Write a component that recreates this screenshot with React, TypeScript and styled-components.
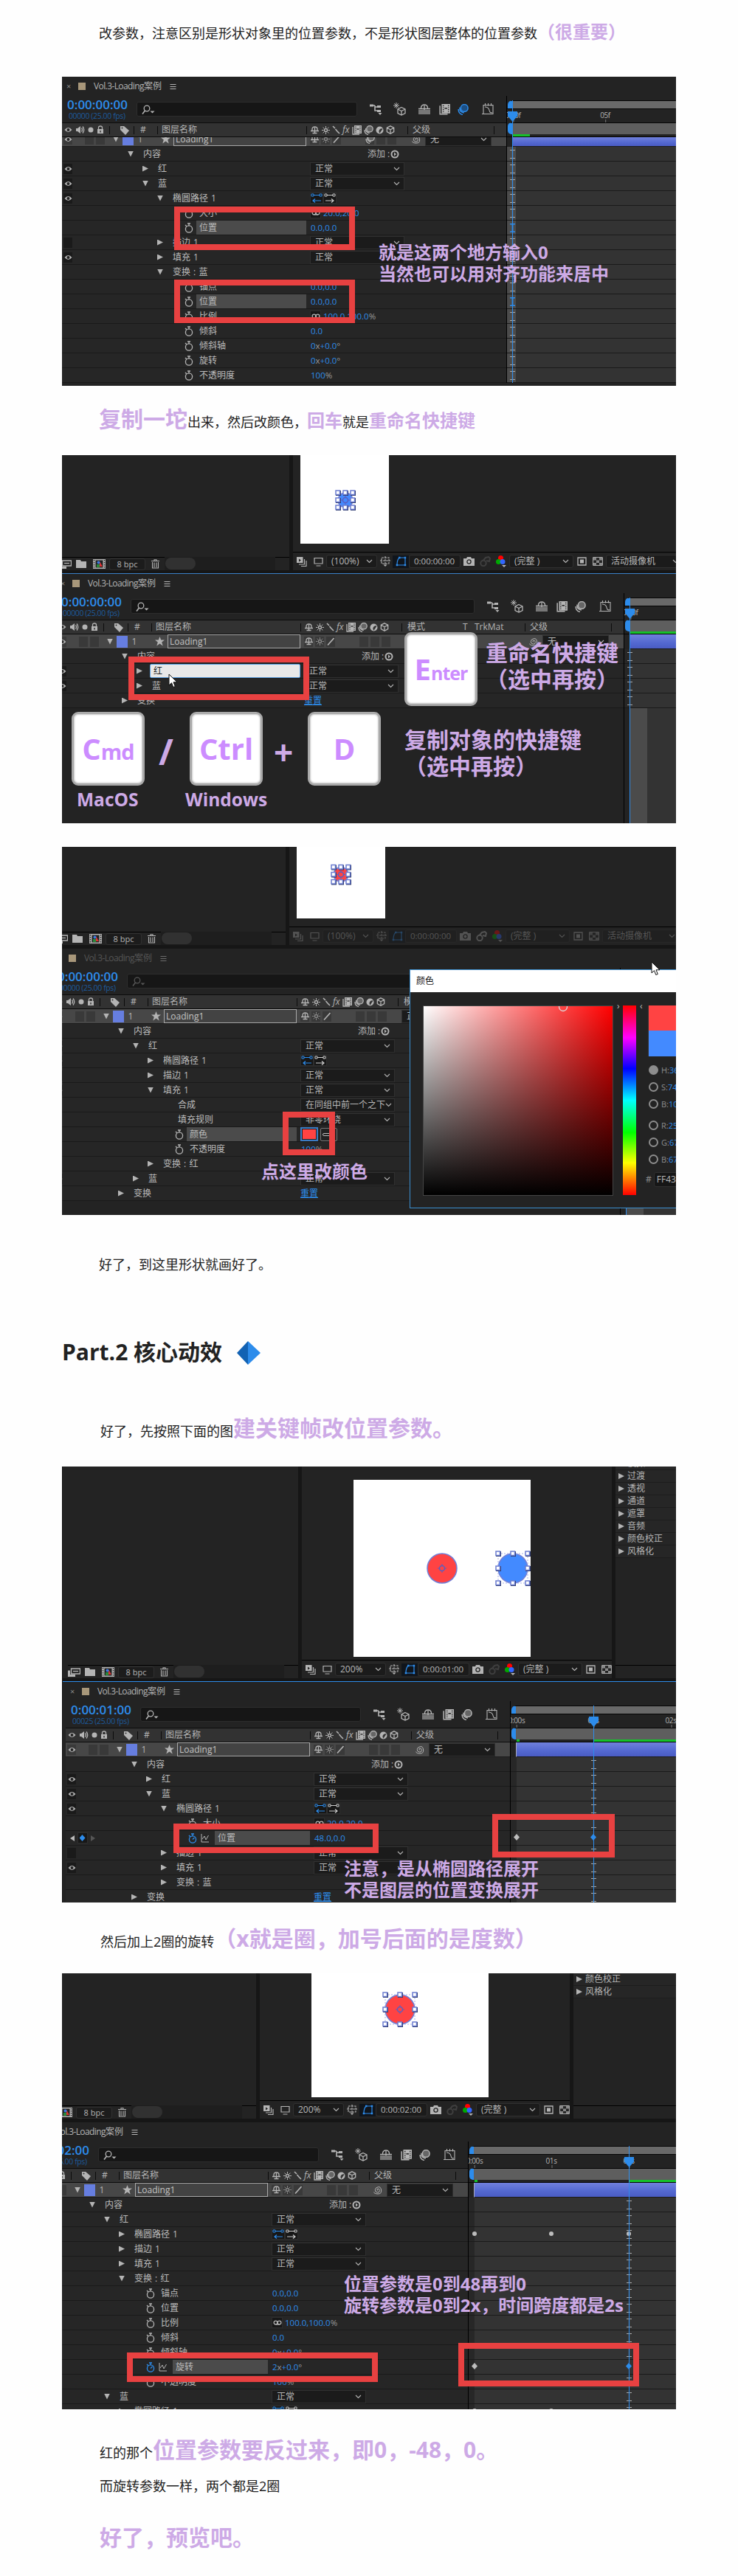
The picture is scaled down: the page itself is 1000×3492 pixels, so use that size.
import React from 'react';
import styled, { createGlobalStyle, css } from 'styled-components';

const BLUE = '#2d8ceb';
const GREY = '#b4b4b4';
const LILAC = '#cdaae6';
const FONT = '"Open Sans", "Noto Sans CJK SC", sans-serif';

const Global = createGlobalStyle`
  * { box-sizing: border-box; }
  body { margin: 0; background: #fefefe; }
  svg { display: block; flex: none; }
`;

/* ---------- article ---------- */

const Page = styled.main`
  width: 1000px;
  height: 3492px;
  padding: 0 84px;
  overflow: hidden;
  font-family: ${FONT};
  color: #222;
`;

const Para = styled.p<{ $h: number; $top: number; $left?: number }>`
  margin: 0;
  height: ${p => p.$h}px;
  padding: ${p => p.$top}px 0 0 ${p => p.$left ?? 50}px;
  font-size: 18px;
  line-height: 30px;
  white-space: nowrap;
`;

const Em = styled.strong<{ $size?: number }>`
  font-size: ${p => p.$size ?? 30}px;
  line-height: 30px;
  font-weight: 700;
  color: ${LILAC};
`;

const Heading = styled.h2`
  margin: 0;
  height: 92px;
  display: flex;
  align-items: flex-start;
  gap: 19px;
  font-size: 30px;
  line-height: 39px;
  font-weight: 700;
  svg { margin-top: 5px; }
`;

/* ---------- figure frame and annotations ---------- */

const Figure = styled.figure<{ $h: number; $mb?: number; $edge?: boolean }>`
  position: relative;
  margin: 0 0 ${p => p.$mb ?? 0}px;
  width: 832px;
  height: ${p => p.$h}px;
  overflow: hidden;
  background: #232323;
  color: ${GREY};
  font-size: 12px;
  line-height: 16px;
  white-space: nowrap;
  ${p => p.$edge && css`&::after { content: ''; position: absolute; left: 0; top: 0; width: 1px; height: 100%; background: #0d0d0d; }`}
`;

const Frame = styled.div<{ $x: number; $y: number; $w: number; $h: number }>`
  position: absolute;
  left: ${p => p.$x}px;
  top: ${p => p.$y}px;
  width: ${p => p.$w}px;
  height: ${p => p.$h}px;
  border: 8px solid #e84141;
`;

const Note = styled.div<{ $x: number; $y: number; $size?: number; $lh?: number }>`
  position: absolute;
  left: ${p => p.$x}px;
  top: ${p => p.$y}px;
  font-size: ${p => p.$size ?? 24}px;
  line-height: ${p => p.$lh ?? 29}px;
  font-weight: 700;
  color: ${LILAC};
  white-space: pre-line;
`;

const KeyCap = styled.div<{ $x: number; $y: number }>`
  position: absolute;
  left: ${p => p.$x}px;
  top: ${p => p.$y}px;
  width: 99px;
  height: 100px;
  border: 3px solid #aaa;
  border-radius: 9px;
  background: #fff;
  box-shadow: inset 0 0 2px 1px #c8c8c8;
  display: flex;
  align-items: baseline;
  justify-content: center;
  padding-top: 20px;
  line-height: 54px;
  font-size: 40px;
  font-weight: 700;
  color: #cc8cff;
`;
const Small = styled.span<{ $s: number }>`font-size: ${p => p.$s}px; letter-spacing: -1px;`;

/* ---------- icons ---------- */

const Svg = ({ w = 14, h = 14, vb, children, c = GREY }: any) => (
  <svg width={w} height={h} viewBox={vb ?? `0 0 ${w} ${h}`} fill="none" stroke={c} strokeWidth="1.3">{children}</svg>
);
const Eye = () => <Svg w={11} h={8}><path d="M.5 4Q5.500-2 10.500 4Q5.500 10 .5 4Z" fill={GREY} stroke="none" /><circle cx="5.500" cy="4" r="2" fill="#222" stroke="none" /></Svg>;
const Speaker = () => <Svg w={13} h={12}><path d="M1 4h2l4-3v10L3 8H1z" fill={GREY} stroke="none" /><path d="M8.500 3.500q2 2.500 0 5M10 1.500q3.500 4.500 0 9" /></Svg>;
const Dot = () => <Svg w={8} h={8}><circle cx="4" cy="4" r="3.500" fill={GREY} stroke="none" /></Svg>;
const Lock = () => <Svg w={10} h={12}><path d="M2.500 6V3q0-2 2.500-2t2.500 2v3" /><rect x="1" y="5" width="8" height="6" fill={GREY} stroke="none" /><path d="M5 7v2.500" stroke="#222" /></Svg>;
const Tag = () => <Svg w={13} h={13}><path d="M1 1h5l7 6-5 6-7-7z" fill={GREY} stroke="none" /><circle cx="3.500" cy="3.500" r="1" fill="#333" stroke="none" /></Svg>;
const Shy = () => <Svg w={13} h={11}><path d="M3 6V4q0-3 3.500-3T10 4v2M1 6.500h11M6.500 2v8M3.500 9.500h6" /></Svg>;
const Sun = ({ c = GREY }: any) => <Svg w={11} h={11} c={c}><circle cx="5.500" cy="5.500" r="2" /><path d="M5.500 0v2.500M5.500 8.500v2.500M0 5.500h2.500M8.500 5.500H11M1.600 1.600l1.600 1.600M7.800 7.800l1.600 1.600M9.400 1.600L7.800 3.200M3.200 7.800L1.600 9.400" strokeWidth="1" /></Svg>;
const Slash = () => <Svg w={10} h={11}><path d="M1 10.500L9.500 1" strokeWidth="1.600" /></Svg>;
const Back = () => <Svg w={11} h={12}><path d="M1 1l3 3M4.500 5l2.500 3M7 8l3 3" strokeWidth="1.600" /></Svg>;
const Film = ({ s = 13 }: any) => <Svg w={s} h={s} vb="0 0 13 13"><path d="M1 2v10h9" /><path d="M3 0h10v11H3z" fill={GREY} stroke="none" /><path d="M5 1.500v8M11 1.500v8" stroke="#222" strokeDasharray="1 1.300" /><path d="M6.500 5h3" stroke="#222" /></Svg>;
const Blur = ({ s = 13, on }: any) => <Svg w={s} h={s} vb="0 0 13 13" c={on ? BLUE : GREY}><circle cx="8" cy="4.700" r="4.200" fill={on ? '#1c4f84' : '#666'} /><path d="M2.700 4q-1 5 5 6.500M1 6q0 5.500 5 6.500" /></Svg>;
const Half = () => <Svg w={11} h={11}><circle cx="5.500" cy="5.500" r="5" fill={GREY} stroke="none" /><path d="M5.500 8.500a3 3 0 0 1 3-4.500z" fill="#333" stroke="#333" /></Svg>;
const Cube = ({ s = 12 }: any) => <Svg w={s} h={s} vb="0 0 12 12"><path d="M6 .8l4.700 2.400v5.400L6 11.200 1.300 8.600V3.200zM1.300 3.200L6 5.800l4.700-2.600M6 5.800v5.400" /></Svg>;
const Flow = () => <Svg w={18} h={16}><path d="M1 3h7M8 3v7h5M8 5h5" strokeWidth="1.600" /><path d="M1 1.500h5v3H1zM11 3h5v3h-5zM11 9h5v3h-5zM12.500 13h5L15 16z" fill={GREY} stroke="none" /></Svg>;
const Star3d = () => <Svg w={18} h={18}><path d="M4 0v8M0 4h8M1.300 1.300l5.400 5.400M6.700 1.300L1.300 6.700" strokeWidth="1" /><path d="M11 6.500l5 2.500v5.500l-5 2.500-5-2.500V9zM6 9l5 2.500L16 9M11 11.500V17" /></Svg>;
const ShyBig = () => <Svg w={18} h={14}><path d="M4.500 6V5Q5 1 9 1t4.500 4v1M1 6.500h16M9 2v8" /><path d="M1 8h16v6H1z" fill="#777" stroke="none" /></Svg>;
const Graph = () => <Svg w={17} h={18}><path d="M2 3.500h13v12H2zM4.500 1v3.500M8.500 1v3.500M12.500 1v3.500M0 15.500h2M4 6q5 0 6 4.500t4 3" strokeWidth="1.100" /></Svg>;
const Loupe = ({ c = GREY }: any) => <Svg w={18} h={14} c={c}><circle cx="7" cy="5" r="3.800" /><path d="M4.500 8L1 12.500" strokeWidth="1.600" /><path d="M11.500 8.500h6l-3 3z" fill={c} stroke="none" /></Svg>;
const Chevron = () => <Svg w={9} h={6}><path d="M1 1l3.500 3.500L8 1" strokeWidth="1.100" /></Svg>;
const Burger = () => <Svg w={9} h={9}><path d="M.5 1.500h8M.5 4.500h8M.5 7.500h8" strokeWidth="1" /></Svg>;
const Star = () => <Svg w={13} h={13}><path d="M6.500 0l1.700 4.600H13L9.200 7.600l1.500 5-4.200-3-4.200 3 1.500-5L0 4.600h4.800z" fill={GREY} stroke="none" /></Svg>;
const Spiral = () => <Svg w={13} h={12}><path d="M6.500 6.500q-1.500-2 .5-2.500t2.300 2.500-3 2.500-3-3.500 4-3.800 4.300 4.300-4.500 5-5.500-2.500" strokeWidth="1" /></Svg>;
const Watch = ({ on }: any) => <Svg w={12} h={14} c={on ? BLUE : GREY}><circle cx="6" cy="8.500" r="4.600" /><path d="M6 4V1.500M4 1h4M1 3l1.800 1.800" />{on && <path d="M6 8.500l2.500-2.500" />}</Svg>;
const GraphMini = () => <Svg w={12} h={12}><path d="M1 0v11h10M2 7l3-4 2 5 3.500-6" strokeWidth="1" /></Svg>;
const Add = () => <Svg w={12} h={12}><circle cx="6" cy="6" r="4.500" strokeWidth="2" /><path d="M5 3.500l3 2.500-3 2.500z" fill={GREY} stroke="none" /></Svg>;
const Link = () => <Svg w={12} h={8}><circle cx="3.500" cy="3.500" r="2.400" /><circle cx="8.500" cy="3.500" r="2.400" /><path d="M3.500 6h5.500" /></Svg>;
const PathDir = ({ on }: any) => <Svg w={16} h={13} c={on ? BLUE : '#ccc'}><path d="M1 1h3v3H1zM12 1h3v3h-3zM4 2.500h8" strokeWidth="1" /><path d={on ? 'M14 10H3M6 7.500L3 10l3 2.500' : 'M2 10h11M10 7.500l3 2.500-3 2.500'} strokeWidth="1.200" /></Svg>;
const Monitor = () => <Svg w={13} h={13}><path d="M1 1.500h11v7.500H1zM3.500 12h6" strokeWidth="1.200" /></Svg>;
const Stack = () => <Svg w={14} h={13}><path d="M0 0h8.500v8H0z" fill={GREY} stroke="none" /><path d="M3 2.500l3 2-3 2z" fill="#222" stroke="none" /><path d="M10.500 3v7H3M13 5v7.500H6" strokeWidth="1.200" /></Svg>;
const Grid = () => <Svg w={14} h={14}><path d="M2 2h10v8H2zM7 0v12M0 6h14" strokeDasharray="3 1" strokeWidth="1.100" /><path d="M4.500 11.500h5L7 14z" fill={GREY} stroke="none" /></Svg>;
const Mask = () => <Svg w={15} h={14} c={BLUE}><path d="M2 12Q2 5 5 2h8v10z" strokeWidth="1.200" /><path d="M.7 10.700h2.500v2.500H.7zM4 .7h2.500v2.500H4zM11.700.7h2.500v2.500h-2.500zM11.700 10.700h2.500v2.500h-2.500z" fill={BLUE} stroke="none" /></Svg>;
const Camera = () => <Svg w={15} h={12}><path d="M0 2h4l1-2h5l1 2h4v10H0z" fill={GREY} stroke="none" /><circle cx="7.500" cy="6.500" r="2.600" stroke="#222" /></Svg>;
const Ghost = ({ c = '#3f3f3f' }: any) => <Svg w={15} h={14} c={c}><circle cx="5" cy="9.500" r="3.700" strokeWidth="2" /><path d="M5 5.500L8 2l4-1 2 2-1 4-4-1" strokeWidth="2" /></Svg>;
const Rgb = () => <Svg w={14} h={16}><g stroke="none"><circle cx="6.500" cy="3.500" r="3.500" fill="#f00" /><circle cx="3.500" cy="8.500" r="3.500" fill="#0a0" /><circle cx="9" cy="8.500" r="3.500" fill="#36f" /><path d="M8 13h6l-3 3z" fill={GREY} /></g></Svg>;
const Roi = () => <Svg w={13} h={12}><path d="M1 1h11v10H1z" /><path d="M4 3.500h5v5H4z" fill={GREY} stroke="none" /></Svg>;
const Checker = () => <Svg w={14} h={12}><path d="M.6.6h12.800v10.800H.6z" strokeWidth="1" /><path d="M1 1h4v3.500H1zM9 1h4v3.500H9zM5 4.500h4v3.500H5zM1 8h4v3H1zM9 8h4v3H9z" fill="#888" stroke="none" /></Svg>;
const Footage = () => <Svg w={17} h={12}><path d="M4.500 1h12v7h-12z" strokeWidth="1.400" /><path d="M7 4.500h7" /><path d="M0 3.500h3V9h7v3H0z" fill={GREY} stroke="none" /></Svg>;
const Folder = () => <Svg w={14} h={11}><path d="M0 0h6l1 2h7v9H0z" fill={GREY} stroke="none" /></Svg>;
const CompIcon = () => <Svg w={17} h={13}><path d="M0 0h17v13H0z" fill={GREY} stroke="none" /><path d="M3.500 1.500h10v10h-10z" fill="#222" stroke="none" /><path d="M1.500 1v11M15.500 1v11" stroke="#222" strokeDasharray="1.500 1.500" /><path d="M9 3l4 7H9z" fill="#d33" stroke="none" /><circle cx="7.500" cy="4.500" r="2" fill="#3a7be0" stroke="none" /><path d="M5 7h4v4H5z" fill="#2a8a3a" stroke="none" /></Svg>;
const Trash = () => <Svg w={11} h={13}><path d="M0 2.500h11M4 2V.7h3V2M1.500 4v8h8V4M4 4.500V11M7 4.500V11" strokeWidth="1.100" /></Svg>;
const CursorWrap = styled.div<{ $x: number; $y: number }>`position: absolute; left: ${p => p.$x}px; top: ${p => p.$y}px;`;
const Cursor = ({ x, y }: any) => (
  <CursorWrap $x={x} $y={y}><svg width="13" height="20" viewBox="0 0 13 20"><path d="M1 1v15l3.500-3.300 2.300 5.800 2.500-1-2.300-5.700H12z" fill="#fff" stroke="#111" /></svg></CursorWrap>
);
const Triangle = styled.i<{ $open?: boolean }>`
  flex: none;
  width: 8px;
  height: 8px;
  background: ${GREY};
  clip-path: ${p => (p.$open ? 'polygon(0 0, 100% 0, 50% 100%)' : 'polygon(0 0, 100% 50%, 0 100%)')};
`;

/* ---------- project / composition / effects area ---------- */

const Upper = styled.div<{ $h: number; $line?: string }>`
  display: flex;
  height: ${p => p.$h}px;
  gap: 5px;
  padding-bottom: 4px;
  background: #161616;
  border-bottom: 1px solid ${p => p.$line ?? '#161616'};
`;
const Pane = styled.section<{ $w?: number }>`
  ${p => (p.$w ? `width: ${p.$w}px; flex: none;` : 'flex: 1; min-width: 0;')}
  display: flex;
  flex-direction: column;
  overflow: hidden;
  background: #232323;
`;
const Stage = styled.div<{ $l: number; $t: number }>`
  flex: 1;
  min-height: 0;
  padding: ${p => p.$t}px 0 0 ${p => p.$l}px;
`;
const ProjectBar = styled.div<{ $shift: number }>`
  height: 18px;
  margin-left: ${p => p.$shift - 4}px;
  width: 312px;
  flex: none;
  display: flex;
  align-items: center;
  border-top: 1px solid #000;
`;
const Group = styled.div<{ $w: number; $j?: string }>`
  width: ${p => p.$w}px;
  flex: none;
  display: flex;
  align-items: center;
  justify-content: ${p => p.$j ?? 'center'};
`;
const Bpc = styled.div`
  width: 49px;
  height: 16px;
  border: 1px solid #303030;
  border-radius: 3px;
  background: #1c1c1c;
  text-align: center;
  font-size: 11px;
  line-height: 14px;
`;
const BarRest = styled.div`
  width: 150px;
  height: 18px;
  margin-top: -1px;
  padding-left: 1px;
  background: #1e1e1e;
`;
const Pill = styled.div`
  width: 41px;
  height: 16px;
  margin-top: 1px;
  border-radius: 8px;
  background: #313131;
`;
const ViewBar = styled.div<{ $dim?: boolean }>`
  height: 25px;
  flex: none;
  display: flex;
  align-items: center;
  border-top: 1px solid #000;
  & > * { opacity: ${p => (p.$dim ? 0.32 : 1)}; }
`;
const Drop = styled.div<{ $w: number; $plain?: boolean; $fs?: number }>`
  width: ${p => p.$w}px;
  height: 18px;
  flex: none;
  display: flex;
  align-items: center;
  justify-content: space-between;
  padding: 0 5px 0 6px;
  border: 1px solid #303030;
  border-radius: ${p => (p.$plain ? 0 : 3)}px;
  background: #1b1b1b;
  font-size: ${p => p.$fs ?? 12}px;
  color: #b9b9b9;
  overflow: hidden;
`;
const MaskSlot = styled.div`
  width: 22px;
  height: 17px;
  background: #10151c;
  display: flex;
  align-items: center;
  justify-content: center;
  flex: none;
`;
const EffectRow = styled.div`
  height: 17px;
  flex: none;
  display: flex;
  align-items: center;
  gap: 4px;
  padding-left: 4px;
  border-bottom: 1px solid #1d1d1d;
  background: #262626;
`;
const EffectList = styled.div<{ $scroll: number }>`
  flex: 1;
  min-height: 0;
  overflow: hidden;
  & > :first-child { margin-top: ${p => -p.$scroll}px; }
`;
const EffectFoot = styled.div`height: 18px; border-top: 1px solid #000; flex: none;`;

const Handles = ({ cx, cy, r, dots }: any) => (
  <g>
    {dots && <rect x={cx - r} y={cy - r} width={2 * r} height={2 * r} fill="none" stroke="#a8b0e8" strokeDasharray="2 2" />}
    {[-1, 0, 1].map(i => [-1, 0, 1].map(j => (i || j) ? (
      <g key={`${i}${j}`}>
        <rect x={cx + i * r - 3} y={cy + j * r - 3} width="7" height="7" fill="#24305c" />
        <rect x={cx + i * r - 3} y={cy + j * r - 3} width="5.500" height="5.500" fill="#fff" stroke="#6b7cd0" strokeWidth="1.500" />
      </g>
    ) : null))}
  </g>
);
const Anchor = ({ cx, cy }: any) => (
  <g stroke="#5a5fc0" fill="none"><circle cx={cx} cy={cy} r="3.500" strokeWidth="1.500" /><path d={`M${cx} ${cy - 6}v3M${cx} ${cy + 3}v3M${cx - 6} ${cy}h3M${cx + 3} ${cy}h3`} /></g>
);
type Ball = { cx: number; cy: number; r: number; fill: string; handles?: boolean; anchor?: boolean };
const Canvas = ({ w, h, balls }: { w: number; h: number; balls: Ball[] }) => (
  <svg width={w} height={h} viewBox={`0 0 ${w} ${h}`}>
    <rect width={w} height={h} fill="#fff" />
    {balls.map((b, i) => (
      <g key={i}>
        <circle cx={b.cx} cy={b.cy} r={b.r} fill={b.fill} stroke="#6f7fd8" strokeWidth="1.500" />
        {b.handles && <Handles cx={b.cx} cy={b.cy} r={b.r} dots={b.r > 12} />}
        {b.anchor && <Anchor cx={b.cx} cy={b.cy} />}
      </g>
    ))}
  </svg>
);

const effects = ['过渡', '透视', '通道', '遮罩', '音频', '颜色校正', '风格化'];

function Workspace(p: {
  h: number; shift: number; line?: string; viewW?: number; left: number; top?: number;
  canvas: { w: number; h: number; balls: Ball[] }; zoom: string; time: string; dim?: boolean; fx?: string[]; scroll?: number;
}) {
  return (
    <Upper $h={p.h} $line={p.line}>
      <Pane $w={308 + p.shift}>
        <Stage $l={0} $t={0} />
        <ProjectBar $shift={p.shift}>
          <Group $w={17}><Footage /></Group>
          <Group $w={25}><Folder /></Group>
          <Group $w={25}><CompIcon /></Group>
          <Group $w={50} $j="flex-end"><Bpc>8 bpc</Bpc></Group>
          <Group $w={26}><Trash /></Group>
          <BarRest><Pill /></BarRest>
        </ProjectBar>
      </Pane>
      <Pane $w={p.viewW}>
        <Stage $l={p.left} $t={p.top ?? 0}><Canvas {...p.canvas} /></Stage>
        <ViewBar $dim={p.dim}>
          <Group $w={23}><Stack /></Group>
          <Group $w={22}><Monitor /></Group>
          <Drop $w={69}>{p.zoom}<Chevron /></Drop>
          <Group $w={21}><Grid /></Group>
          <MaskSlot><Mask /></MaskSlot>
          <Drop $w={70} $fs={11.500}>{p.time}</Drop>
          <Group $w={23}><Camera /></Group>
          <Group $w={21}><Ghost c={p.dim ? '#b4b4b4' : undefined} /></Group>
          <Group $w={22}><Rgb /></Group>
          <Drop $w={87}>(完整 )<Chevron /></Drop>
          <Group $w={22}><Roi /></Group>
          <Group $w={22}><Checker /></Group>
          <Drop $w={105}>活动摄像机<Chevron /></Drop>
        </ViewBar>
      </Pane>
      {p.fx && (
        <Pane>
          <EffectList $scroll={p.scroll ?? 0}>
            {p.fx.map(e => <EffectRow key={e}><Triangle />{e}</EffectRow>)}
          </EffectList>
          <EffectFoot />
        </Pane>
      )}
    </Upper>
  );
}

/* ---------- timeline ---------- */

const Shift = styled.div<{ $x: number }>`
  width: ${p => 832 - p.$x}px;
  margin-left: ${p => p.$x}px;
`;
const TabBar = styled.div<{ $dim?: boolean }>`
  height: 26px;
  display: flex;
  align-items: center;
  padding-left: 6px;
  font-size: 12px;
  color: ${p => (p.$dim ? '#555' : GREY)};
  svg { opacity: ${p => (p.$dim ? 0.5 : 1)}; }
`;
const Close = styled.span`width: 16px; font-size: 11px; color: #888;`;
const Swatch = styled.i<{ $w: number; $h: number; $c: string }>`
  width: ${p => p.$w}px; height: ${p => p.$h}px; background: ${p => p.$c}; flex: none;
`;
const TabName = styled.span`width: 103px; margin-left: 11px; letter-spacing: -0.6px; b { font-weight: 400; letter-spacing: 0; }`;
const Split = styled.div`display: flex;`;
const Left = styled.div<{ $w: number }>`width: ${p => p.$w}px; flex: none;`;
const Tools = styled.div`
  height: 36px;
  display: flex;
  padding-left: 7px;
`;
const Clock = styled.div`
  width: 94px;
  padding-top: 2px;
  font-size: 17px;
  font-weight: 600;
  line-height: 20px;
  color: ${BLUE};
`;
const Fps = styled.div`
  font-size: 10.500px;
  line-height: 11px;
  font-weight: 400;
  color: #1d5a9c;
  letter-spacing: -0.4px;
  padding-left: 2px;
`;
const Search = styled.div<{ $w: number }>`
  width: ${p => p.$w}px;
  height: 20px;
  margin-top: 8px;
  border: 1px solid #2d2d2d;
  border-radius: 3px;
  background: #161616;
  padding: 3px 0 0 6px;
`;
const ToolIcons = styled.div`
  display: flex;
  align-items: center;
  height: 36px;
  margin-left: 8px;
`;
const HeadRow = styled.div`
  height: 20px;
  display: flex;
  background: #323232;
  border-top: 1px solid #0c0c0c;
  border-bottom: 1px solid #0c0c0c;
`;
const HeadCell = styled.div<{ $w: number; $pl?: number; $gap?: number }>`
  width: ${p => p.$w}px;
  flex: none;
  display: flex;
  align-items: center;
  gap: ${p => p.$gap ?? 0}px;
  padding-left: ${p => p.$pl ?? 5}px;
  position: relative;
  &::after { content: ''; position: absolute; right: 0; top: 4px; height: 11px; width: 1px; background: #0c0c0c; }
`;
const LayerRow = styled.div<{ $clip: number }>`
  height: ${p => 20 - p.$clip}px;
  display: flex;
  align-items: flex-end;
  overflow: hidden;
  background: #474747;
  border-bottom: 1px solid #1c1c1c;
`;
const LayerInner = styled.div`height: 19px; display: flex; align-items: center; flex: none;`;
const Slot = styled.div<{ $ml?: number; $c?: string }>`
  width: 12px;
  height: 14px;
  margin-left: ${p => p.$ml ?? 0}px;
  background: ${p => p.$c ?? '#393939'};
  display: flex;
  align-items: center;
  justify-content: center;
  flex: none;
`;
const NameBox = styled.div`
  width: 180px;
  height: 19px;
  border: 1.500px solid #a9a9a9;
  background: #434343;
  padding-left: 2px;
  line-height: 17px;
  color: #c4c4c4;
`;
const Row = styled.div`
  height: 20px;
  display: flex;
  align-items: center;
  background: #262626;
  border-bottom: 1px solid #1a1a1a;
`;
const AvCell = styled.div`
  width: 65px;
  flex: none;
  display: flex;
  align-items: center;
  padding-left: 2px;
`;
const TreeCell = styled.div<{ $pl: number }>`
  width: 266px;
  height: 19px;
  flex: none;
  display: flex;
  align-items: center;
  padding-left: ${p => p.$pl}px;
`;
const Label = styled.span<{ $ml: number; $on?: boolean }>`
  margin-left: ${p => p.$ml}px;
  flex: 1;
  height: 19px;
  line-height: 19px;
  padding-left: 4px;
  color: #bcbcbc;
  word-spacing: ${p => (p.$on ? 0 : 1)}px;
  background: ${p => (p.$on ? '#4b4b4b' : 'transparent')};
`;
const ValueCell = styled.div`
  display: flex;
  align-items: center;
  padding-left: 5px;
`;
const Num = styled.span`
  color: ${BLUE};
  font-size: 11.500px;
  padding-left: 1px;
  i { font-style: normal; color: #999; }
`;
const Reset = styled.span`color: ${BLUE}; text-decoration: underline;`;
const Chip = styled.div<{ $w?: number }>`
  width: ${p => p.$w ?? 17}px;
  height: 15px;
  background: #171717;
  border: 1px solid #2e2e2e;
  display: flex;
  align-items: center;
  justify-content: center;
  flex: none;
`;
const AddCell = styled.div`width: 133px; padding-left: 83px; display: flex; align-items: center; gap: 1px;`;
const RenameBox = styled.div`
  margin-left: 10px;
  width: 206px;
  height: 19px;
  background: #e8e8e8;
  border: 1px solid #5b9fe0;
  border-radius: 2px;
  color: #222;
  line-height: 17px;
  padding-left: 4px;
`;
const Color = styled.div`width: 24px; height: 19px; border: 2px solid #3c7cc4; background: #ff4343; box-shadow: inset 0 0 0 1px #222;`;
const Dropper = styled.div`width: 23px; height: 18px; margin-left: 3px; border: 1px solid #777; background: #222; border-radius: 2px; display: flex; align-items: center; padding-left: 2px;
  i { width: 12px; height: 4px; border: 1px solid #bbb; border-radius: 3px; }`;

const Right = styled.div`
  flex: 1;
  min-width: 0;
  position: relative;
  border-left: 1px solid #000;
  overflow: hidden;
`;
const Navigator = styled.div`
  height: 11px;
  margin: 6px 0 0 1px;
  background: #696969;
  border-top: 1px solid #050505;
  border-left: 6px solid ${BLUE};
  border-radius: 6px 0 0 0;
`;
const Ruler = styled.div`
  height: 19px;
  position: relative;
  background: #232323;
  border-top: 1px solid #050505;
  font-size: 10px;
  overflow: hidden;
`;
const Tick = styled.span<{ $x: number }>`
  position: absolute;
  left: ${p => p.$x}px;
  top: 0;
  transform: translateX(-50%);
  letter-spacing: -0.4px;
  &::after { content: ''; position: absolute; left: 50%; top: 14px; height: 5px; width: 1px; background: #777; }
`;
const Work = styled.div`
  height: 16px;
  margin-left: 1px;
  background: #5e5e5e;
  border-top: 1px solid #050505;
  border-left: 6px solid ${BLUE};
  border-radius: 5px 0 0 5px;
`;
const Cache = styled.div<{ $from: number; $to?: number; $dot?: boolean }>`
  height: 4px;
  background: linear-gradient(#16c02a, #16c02a) ${p => p.$from}px 0 / ${p => p.$to ?? 2000}px 3px no-repeat,
    ${p => (p.$dot ? 'linear-gradient(#16c02a, #16c02a) 8px 0 / 4px 3px no-repeat,' : '')} #222;
  border-bottom: 1px solid #050505;
`;
const Strip = styled.div<{ $h: number }>`
  height: ${p => p.$h}px;
  border-bottom: 1px solid #1c1c1c;
  margin-left: 7px;
  border-left: 1px solid #aab;
  background: linear-gradient(#7080dc, #5368d0 60%, #4a5cc4);
`;
const Lane = styled.div<{ $band?: number }>`
  position: relative;
  height: 20px;
  border-bottom: 1px solid #1a1a1a;
  background: ${p => (p.$band
    ? `linear-gradient(90deg, #4b4b4b ${p.$band}px, #333 ${p.$band}px)`
    : 'linear-gradient(90deg, #272727 8px, #333 8px)')};
`;
const LaneRest = styled.div<{ $band: number }>`
  height: 400px;
  background: linear-gradient(90deg, #232323 8px, #4b4b4b 8px, #4b4b4b ${p => p.$band}px, #333 ${p => p.$band}px);
`;
const Cti = styled.div<{ $x: number; $h: number }>`
  position: absolute;
  left: ${p => p.$x}px;
  top: 6px;
  width: 1px;
  height: ${p => p.$h}px;
  background: ${BLUE};
`;
const CtiHead = styled.div<{ $x: number }>`
  position: absolute;
  left: ${p => p.$x - 6}px;
  top: 21px;
  width: 13px;
  height: 14px;
  background: ${BLUE};
  clip-path: polygon(0 0, 100% 0, 100% 45%, 50% 100%, 0 45%);
`;
const Mark = styled.div<{ $x: number }>`
  position: absolute;
  left: ${p => p.$x - 3}px;
  top: 4px;
`;
const Beam = ({ on }: { on?: boolean }) => <svg width="7" height="12"><path d="M0 .5h7M0 11.500h7M3.500 0v12" stroke={on ? BLUE : '#a8a8a8'} strokeWidth={on ? 1.800 : 1.200} /></svg>;
const Diamond = styled.i<{ $on?: boolean; $round?: boolean }>`
  display: block;
  width: ${p => (p.$round ? 6 : 8)}px;
  height: ${p => (p.$round ? 6 : 9)}px;
  margin: ${p => (p.$round ? '2px 0 0 0' : '0 0 0 -1px')};
  background: ${p => (p.$on ? BLUE : '#bdbdbd')};
  ${p => (p.$round ? 'border-radius: 50%;' : 'clip-path: polygon(50% 0, 100% 50%, 50% 100%, 0 50%);')}
`;
const KeyNav = styled.div`
  width: 50px;
  display: flex;
  align-items: center;
  padding-left: 4px;
  gap: 4px;
`;

type R = {
  t: string; lv: number; open?: boolean; kind?: 'prop' | 'plain'; eye?: 'on' | 'off'; mode?: string; add?: boolean;
  path?: boolean; link?: boolean; num?: React.ReactNode; on?: boolean; keyed?: boolean; nav?: boolean; rename?: boolean;
  reset?: boolean; color?: boolean; keys?: [number, 'd' | 'D' | 'o'][]; noBeam?: boolean;
};

function TreeRow({ r }: { r: R }) {
  const prop = r.kind === 'prop';
  return (
    <Row>
      <AvCell>
        {r.nav ? (
          <KeyNav>
            <svg width="6" height="8"><path d="M6 0v8L0 4z" fill="#bbb" /></svg>
            <Chip $w={14}><Diamond $on /></Chip>
            <svg width="6" height="8"><path d="M0 0v8l6-4z" fill="#555" /></svg>
          </KeyNav>
        ) : r.eye && <Slot $c="#1a1a1a">{r.eye === 'on' && <Eye />}</Slot>}
      </AvCell>
      {r.kind === 'plain' ? (
        <TreeCell $pl={101}><Label $ml={0}>{r.t}</Label></TreeCell>
      ) : prop ? (
        <TreeCell $pl={101}>
          <Watch on={r.keyed} />
          {r.keyed && <Group $w={21}><GraphMini /></Group>}
          <Label $ml={r.keyed ? 3 : 4} $on={r.on}>{r.t}</Label>
        </TreeCell>
      ) : (
        <TreeCell $pl={24 + r.lv * 20}>
          <Triangle $open={r.open} />
          {r.rename ? <RenameBox>{r.t}</RenameBox> : <Label $ml={9}>{r.t}</Label>}
        </TreeCell>
      )}
      {r.add ? <AddCell>添加 : <Add /></AddCell> : (
        <ValueCell>
          {r.mode && <Drop $w={128} $plain>{r.mode}<Chevron /></Drop>}
          {r.path && <><Chip $w={18}><PathDir on /></Chip><Chip $w={18}><PathDir /></Chip></>}
          {r.link && <Chip $w={15}><Link /></Chip>}
          {r.link && <Group $w={2} />}
          {r.num && <Num>{r.num}</Num>}
          {r.reset && <Reset>重置</Reset>}
          {r.color && <><Color /><Dropper><i /></Dropper></>}
        </ValueCell>
      )}
    </Row>
  );
}

function Timeline(p: {
  x: number; time: string; frame: string; rows: R[]; wide?: boolean; clip?: number; blur?: boolean; dim?: boolean;
  cti: number; ticks: [number, string][]; band?: number; cache: [number, number?]; dot?: boolean; ctiH?: number; restBand?: number;
}) {
  return (
    <Shift $x={p.x}>
      <TabBar $dim={p.dim}>
        <Close>×</Close><Swatch $w={10} $h={10} $c="#a8977a" /><TabName>Vol.3-Loading<b>案例</b></TabName><Burger />
      </TabBar>
      <Split>
        <Left $w={p.wide ? 769 : 602}>
          <Tools>
            <Clock>{p.time}<Fps>{p.frame} (25.00 fps)</Fps></Clock>
            <Search $w={p.wide ? 466 : 299}><Loupe c={p.dim ? '#555' : undefined} /></Search>
            <ToolIcons>
              <Group $w={33}><Flow /></Group>
              <Group $w={33}><Star3d /></Group>
              <Group $w={33}><ShyBig /></Group>
              <Group $w={22}><Film s={15} /></Group>
              <Group $w={28}><Blur s={15} on={p.blur} /></Group>
              <Group $w={40}><Graph /></Group>
            </ToolIcons>
          </Tools>
          <HeadRow>
            <HeadCell $w={65} $pl={3} $gap={4}><Eye /><Speaker /><Dot /><Lock /></HeadCell>
            <HeadCell $w={33} $pl={13}><Tag /></HeadCell>
            <HeadCell $w={32} $pl={8}>#</HeadCell>
            <HeadCell $w={202} $pl={5}>图层名称</HeadCell>
            <HeadCell $w={137} $pl={4} $gap={3}><Shy /><Sun /><Back /><em>fx</em><Film /><Blur /><Half /><Cube /></HeadCell>
            {p.wide && <HeadCell $w={167} $pl={7}><Group $w={75} $j="flex-start">模式</Group><Group $w={16} $j="flex-start">T</Group>TrkMat</HeadCell>}
            <HeadCell $w={117} $pl={6}>父级</HeadCell>
          </HeadRow>
          <LayerRow $clip={p.clip ?? 0}>
            <LayerInner>
              <Slot $ml={2} $c="#3a3a3a"><Eye /></Slot><Slot $ml={17} /><Slot $ml={3} />
              <Group $w={6} /><Group $w={18}><Triangle $open /></Group>
              <Swatch $w={15} $h={16} $c="#667ee0" />
              <Group $w={18}>1</Group><Group $w={32} $j="flex-end"><Star /></Group>
              <Group $w={4} /><NameBox>Loading1</NameBox>
              <Slot $ml={5}><Shy /></Slot><Slot $ml={3}><Sun c="#888" /></Slot><Slot $ml={3}><Slash /></Slot>
              <Slot $ml={33}>{p.blur && <Blur />}</Slot><Slot $ml={3} /><Slot $ml={3} />
              {p.wide && <><Group $w={20} /><Drop $w={94} $plain>正常<Chevron /></Drop><Group $w={53} /></>}
              <Group $w={33} $j="flex-end"><Spiral /></Group><Group $w={6} />
              <Drop $w={90} $plain>无<Chevron /></Drop>
            </LayerInner>
          </LayerRow>
          {p.rows.map((r, i) => <TreeRow key={i} r={r} />)}
        </Left>
        <Right>
          <Navigator />
          <Ruler>{p.ticks.map(([x, l]) => <Tick key={l} $x={x}>{l}</Tick>)}</Ruler>
          <Work />
          <Cache $from={p.cache[0]} $to={p.cache[1]} $dot={p.dot} />
          <Strip $h={20 - (p.clip ?? 0)} />
          {p.rows.map((r, i) => (
            <Lane key={i} $band={p.band}>
              {r.keys?.map(([x, k]) => <Mark key={x} $x={x}><Diamond $on={k === 'D'} $round={k === 'o'} /></Mark>)}
              {!r.noBeam && <Mark $x={p.cti}><Beam on={r.on} /></Mark>}
            </Lane>
          ))}
          {p.restBand && <LaneRest $band={p.restBand} />}
          <Cti $x={p.cti} $h={p.ctiH ?? 700} />
          <CtiHead $x={p.cti} />
        </Right>
      </Split>
    </Shift>
  );
}

const angle = (n: number) => <>{n}<i>x</i>+0.0<i>°</i></>;
const scale = <>100.0,100.0<i>%</i></>;
const full = <>100<i>%</i></>;
const N = '正常';

const rows1: R[] = [
  { t: '内容', lv: 0, open: true, add: true },
  { t: '红', lv: 1, eye: 'on', mode: N },
  { t: '蓝', lv: 1, open: true, eye: 'on', mode: N },
  { t: '椭圆路径 1', lv: 2, open: true, eye: 'on', path: true },
  { t: '大小', lv: 3, kind: 'prop', link: true, num: '20.0,20.0' },
  { t: '位置', lv: 3, kind: 'prop', num: '0.0,0.0', on: true },
  { t: '描边 1', lv: 2, eye: 'off', mode: N },
  { t: '填充 1', lv: 2, eye: 'on', mode: N },
  { t: '变换 : 蓝', lv: 2, open: true },
  { t: '锚点', lv: 3, kind: 'prop', num: '0.0,0.0' },
  { t: '位置', lv: 3, kind: 'prop', num: '0.0,0.0', on: true },
  { t: '比例', lv: 3, kind: 'prop', link: true, num: scale },
  { t: '倾斜', lv: 3, kind: 'prop', num: '0.0' },
  { t: '倾斜轴', lv: 3, kind: 'prop', num: angle(0) },
  { t: '旋转', lv: 3, kind: 'prop', num: angle(0) },
  { t: '不透明度', lv: 3, kind: 'prop', num: full },
];
const rows2: R[] = [
  { t: '内容', lv: 0, open: true, add: true },
  { t: '红', lv: 1, eye: 'on', rename: true, mode: N },
  { t: '蓝', lv: 1, eye: 'on', mode: N },
  { t: '变换', lv: 0, reset: true },
];
const rows3: R[] = [
  { t: '内容', lv: 0, open: true, add: true },
  { t: '红', lv: 1, open: true, eye: 'on', mode: N },
  { t: '椭圆路径 1', lv: 2, eye: 'on', path: true },
  { t: '描边 1', lv: 2, eye: 'off', mode: N },
  { t: '填充 1', lv: 2, open: true, eye: 'on', mode: N },
  { t: '合成', lv: 3, kind: 'plain', mode: '在同组中前一个之下' },
  { t: '填充规则', lv: 3, kind: 'plain', mode: '非零环绕' },
  { t: '颜色', lv: 3, kind: 'prop', on: true, color: true },
  { t: '不透明度', lv: 3, kind: 'prop', num: full },
  { t: '变换 : 红', lv: 2 },
  { t: '蓝', lv: 1, eye: 'on', mode: N },
  { t: '变换', lv: 0, reset: true },
];
const rows4: R[] = [
  { t: '内容', lv: 0, open: true, add: true },
  { t: '红', lv: 1, eye: 'on', mode: N },
  { t: '蓝', lv: 1, open: true, eye: 'on', mode: N },
  { t: '椭圆路径 1', lv: 2, open: true, eye: 'on', path: true },
  { t: '大小', lv: 3, kind: 'prop', link: true, num: '20.0,20.0' },
  { t: '位置', lv: 3, kind: 'prop', num: '48.0,0.0', on: true, keyed: true, nav: true, noBeam: true, keys: [[8, 'd'], [112, 'D']] },
  { t: '描边 1', lv: 2, eye: 'off', mode: N },
  { t: '填充 1', lv: 2, eye: 'on', mode: N },
  { t: '变换 : 蓝', lv: 2 },
  { t: '变换', lv: 0, reset: true },
];
const rows5: R[] = [
  { t: '内容', lv: 0, open: true, add: true },
  { t: '红', lv: 1, open: true, eye: 'on', mode: N },
  { t: '椭圆路径 1', lv: 2, path: true, keys: [[8, 'o'], [112, 'o'], [217, 'o']] },
  { t: '描边 1', lv: 2, mode: N },
  { t: '填充 1', lv: 2, mode: N },
  { t: '变换 : 红', lv: 2, open: true },
  { t: '锚点', lv: 3, kind: 'prop', num: '0.0,0.0' },
  { t: '位置', lv: 3, kind: 'prop', num: '0.0,0.0' },
  { t: '比例', lv: 3, kind: 'prop', link: true, num: scale },
  { t: '倾斜', lv: 3, kind: 'prop', num: '0.0' },
  { t: '倾斜轴', lv: 3, kind: 'prop', num: angle(0) },
  { t: '旋转', lv: 3, kind: 'prop', num: angle(2), on: true, keyed: true, noBeam: true, keys: [[8, 'd'], [217, 'D']] },
  { t: '不透明度', lv: 3, kind: 'prop', num: full },
  { t: '蓝', lv: 1, open: true, mode: N },
  { t: '椭圆路径 1', lv: 2, path: true, keys: [[8, 'o'], [112, 'o']] },
];

/* ---------- colour dialog ---------- */

const Dialog = styled.div`
  position: absolute;
  left: 471px;
  top: 166px;
  width: 440px;
  height: 324px;
  border: 1px solid #3b8fd0;
  background: #232323;
  color: #8d8d8d;
`;
const DialogTitle = styled.div`height: 30px; background: #fff; color: #111; line-height: 30px; padding-left: 8px;`;
const DialogBody = styled.div`display: flex; padding: 18px 0 0 17px; & > * { flex: none; }`;
const Field = styled.div`
  width: 258px;
  height: 258px;
  border: 1px solid #444;
  overflow: hidden;
  background: linear-gradient(transparent, #000), linear-gradient(90deg, #fff, #f00);
  svg { margin-left: 182px; }
`;
const Hue = styled.div`
  width: 18px;
  height: 257px;
  background: linear-gradient(#f00, #f0f 17%, #00f 33.300%, #0ff 50%, #0f0 67%, #ff0 83%, #f00);
`;
const Pointers = styled.div`width: 13px; font-size: 12px; line-height: 2px; padding-left: 5px; color: #bbb;`;
const Side = styled.div`width: 110px; padding-left: 3px;`;
const Compare = styled.div`height: 69px; background: linear-gradient(#ff4343 34px, #438aff 34px); border-left: 1px solid #333;`;
const Radio = styled.div<{ $h: number; $on?: boolean }>`
  height: ${p => p.$h}px;
  display: flex;
  align-items: flex-end;
  font-size: 11px;
  line-height: 13px;
  i { width: 13px; height: 13px; border-radius: 50%; border: 2px solid #8d8d8d; background: ${p => (p.$on ? '#8d8d8d' : 'none')}; margin: 0 4px 0 1px; }
  b { font-weight: 400; color: ${BLUE}; }
`;
const Hex = styled.div`display: flex; margin-top: 11px; align-items: center; gap: 3px; margin-left: -3px;
  span { width: 60px; height: 20px; background: #161616; border: 1px solid #303030; border-radius: 3px; padding-left: 3px; line-height: 18px; color: #bbb; }`;

function ColorDialog() {
  return (
    <Dialog>
      <DialogTitle>颜色</DialogTitle>
      <DialogBody>
        <Field><svg width="14" height="8"><circle cx="7" cy="1" r="5.500" fill="none" stroke="#ddd" strokeWidth="1.300" /></svg></Field>
        <Pointers>›</Pointers><Hue /><Pointers>‹</Pointers>
        <Side>
          <Compare />
          <Radio $h={25} $on><i />H:<b>360</b></Radio>
          <Radio $h={23}><i />S:<b>74</b></Radio>
          <Radio $h={23}><i />B:<b>100</b></Radio>
          <Radio $h={29}><i />R:<b>255</b></Radio>
          <Radio $h={23}><i />G:<b>67</b></Radio>
          <Radio $h={23}><i />B:<b>67</b></Radio>
          <Hex>#<span>FF4343</span></Hex>
        </Side>
      </DialogBody>
    </Dialog>
  );
}

const RED = '#ff4343';
const SKY = '#438aff';

export default function App() {
  return (
    <Page>
      <Global />
      <Para $h={104} $top={28}>改参数，注意区别是形状对象里的位置参数，不是形状图层整体的位置参数<Em $size={24}>（很重要）</Em></Para>

      <Figure $h={419}>
        <Timeline x={0} time="0:00:00:00" frame="00000" rows={rows1} clip={7} blur cti={7} band={12}
          ticks={[[8, '0:00f'], [133, '05f']]} cache={[7, 24]} ctiH={387} />
        <Frame $x={152} $y={176} $w={245} $h={59} />
        <Frame $x={152} $y={275} $w={245} $h={59} />
        <Note $x={429} $y={223}>{'就是这两个地方输入0\n当然也可以用对齐功能来居中'}</Note>
      </Figure>

      <Para $h={94} $top={30}><Em>复制一坨</Em>出来，然后改颜色，<Em $size={24}>回车</Em>就是<Em $size={24}>重命名快捷键</Em></Para>

      <Figure $h={499} $mb={32}>
        <Workspace h={161} shift={0} line="#3a80c8" left={10} zoom="(100%)" time="0:00:00:00"
          canvas={{ w: 120, h: 120, balls: [{ cx: 61, cy: 61, r: 10, fill: SKY, handles: true, anchor: true }] }} />
        <Timeline x={-8} wide time="0:00:00:00" frame="00000" rows={rows2} cti={7}
          ticks={[[8, '0:00f']]} cache={[7]} restBand={31} />
        <Frame $x={90} $y={273} $w={245} $h={59} />
        <Cursor x={144} y={296} />
        <KeyCap $x={464} $y={240}>E<Small $s={25}>nter</Small></KeyCap>
        <KeyCap $x={13} $y={348}>C<Small $s={29}>md</Small></KeyCap>
        <KeyCap $x={173} $y={348}>Ctrl</KeyCap>
        <KeyCap $x={333} $y={348}>D</KeyCap>
        <Note $x={131} $y={374} $size={48} $lh={56}>/</Note>
        <Note $x={287} $y={374} $size={46} $lh={56}>+</Note>
        <Note $x={20} $y={452} $size={24.500}>MacOS</Note>
        <Note $x={167} $y={452} $size={24.500}>Windows</Note>
        <Note $x={574} $y={250} $size={30} $lh={36}>{'重命名快捷键\n（选中再按）'}</Note>
        <Note $x={464} $y={368} $size={30} $lh={36}>{'复制对象的快捷键\n（选中再按）'}</Note>
      </Figure>

      <Figure $h={499}>
        <Workspace h={138} shift={-5} left={10} zoom="(100%)" time="0:00:00:00" dim
          canvas={{ w: 120, h: 97, balls: [{ cx: 60, cy: 37.500, r: 10, fill: RED, handles: true, anchor: true }] }} />
        <Timeline x={-13} wide dim time="0:00:00:00" frame="00000" rows={rows3} cti={7}
          ticks={[[8, '0:00f']]} cache={[7]} restBand={31} />
        <Frame $x={299} $y={359} $w={71} $h={59} />
        <Note $x={270} $y={425}>点这里改颜色</Note>
        <ColorDialog />
        <Cursor x={798} y={155} />
      </Figure>

      <Para $h={166} $top={52}>好了，到这里形状就画好了。</Para>
      <Heading>
        Part.2 核心动效
        <svg width="34" height="32" viewBox="0 0 34 32"><path d="M16 0v32L1 16z" fill="#1262b3" /><path d="M16 0v32l17-16z" fill="#2d8ceb" /></svg>
      </Heading>
      <Para $h={83} $top={16} $left={52}>好了，先按照下面的图<Em>建关键帧改位置参数。</Em></Para>

      <Figure $h={591} $edge>
        <Workspace h={292} shift={12} line="#2d8ceb" viewW={420} left={70} top={18} zoom="200%" time="0:00:01:00" fx={['模拟', ...effects]} scroll={12}
          canvas={{ w: 240, h: 240, balls: [
            { cx: 120, cy: 120, r: 20, fill: RED, anchor: true },
            { cx: 216, cy: 120, r: 20, fill: SKY, handles: true },
          ] }} />
        <Timeline x={5} time="0:00:01:00" frame="00025" rows={rows4} cti={112}
          ticks={[[8, '0:00s'], [112, '01s'], [217, '02s']]} cache={[112]} dot />
        <Frame $x={151} $y={484} $w={278} $h={40} />
        <Frame $x={583} $y={471} $w={166} $h={59} />
        <Note $x={382} $y={530}>{'注意，是从椭圆路径展开\n不是图层的位置变换展开'}</Note>
      </Figure>

      <Para $h={96} $top={34} $left={52}>然后加上2圈的旋转<Em>（x就是圈，加号后面的是度数）</Em></Para>

      <Figure $h={591}>
        <Workspace h={202} shift={-45} viewW={420} left={70} zoom="200%" time="0:00:02:00" fx={effects.slice(5)}
          canvas={{ w: 240, h: 168, balls: [{ cx: 120, cy: 49, r: 20, fill: RED, handles: true, anchor: true }] }} />
        <Timeline x={-52} time="0:00:02:00" frame="00050" rows={rows5} cti={217}
          ticks={[[8, '0:00s'], [112, '01s'], [217, '02s']]} cache={[217]} dot />
        <Frame $x={88} $y={514} $w={340} $h={40} />
        <Frame $x={537} $y={501} $w={245} $h={59} />
        <Note $x={382} $y={406}>{'位置参数是0到48再到0\n旋转参数是0到2x，时间跨度都是2s'}</Note>
      </Figure>

      <Para $h={88} $top={40} $left={51}>红的那个<Em>位置参数要反过来，即0，-48，0。</Em></Para>
      <Para $h={66} $top={1} $left={51}>而旋转参数一样，两个都是2圈</Para>
      <Para $h={50} $top={5} $left={51}><Em>好了，预览吧。</Em></Para>
    </Page>
  );
}
